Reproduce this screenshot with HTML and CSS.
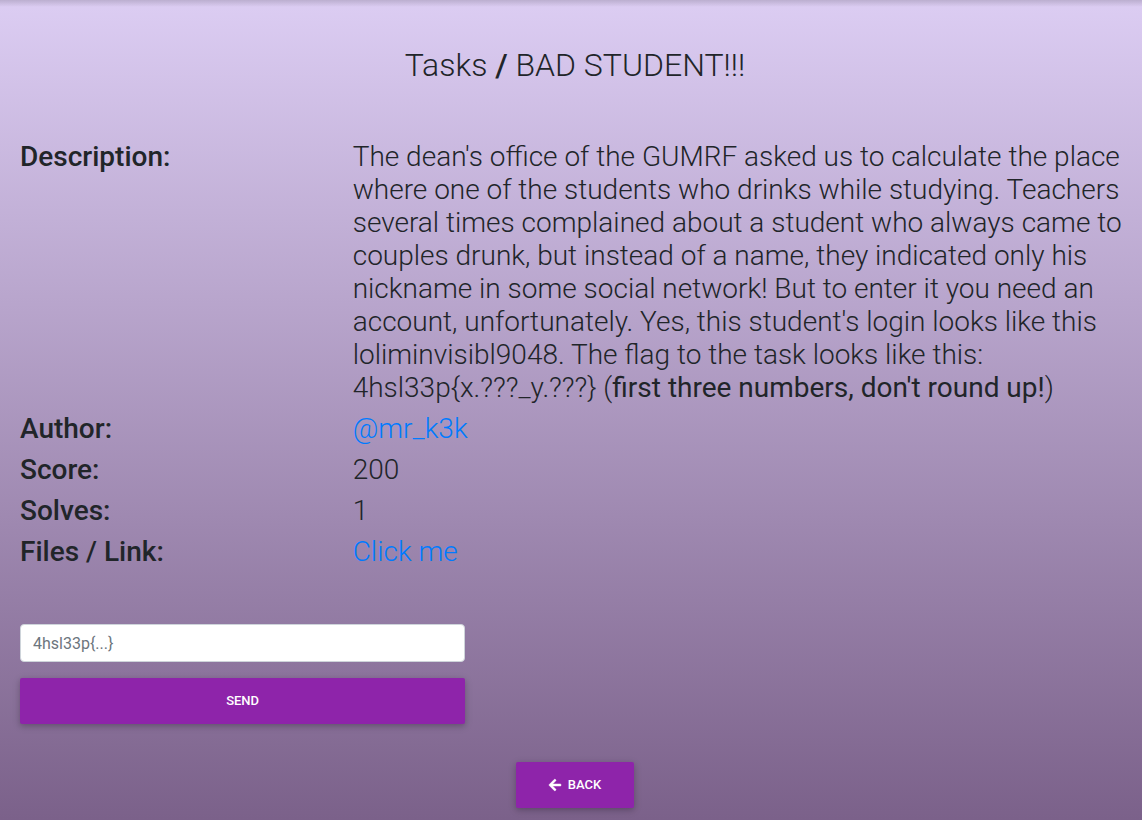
FILE: index.html
```html
<!DOCTYPE html>
<html lang="en">
<head>
<meta charset="utf-8">
<title>BAD STUDENT!!!</title>
<link rel="stylesheet" href="styles.css">
</head>
<body>
<main class="page">
  <h2 class="title">Tasks <strong>/</strong> BAD STUDENT!!!</h2>
  <dl class="details">
    <dt>Description:</dt>
    <dd>The dean's office of the GUMRF asked us to calculate the place where one of the students who drinks while studying. Teachers several times complained about a student who always came to couples drunk, but instead of a name, they indicated only his nickname in some social network! But to enter it you need an account, unfortunately. Yes, this student's login looks like this loliminvisibl9048. The flag to the task looks like this: 4hsl33p{x.???_y.???} (<b>first three numbers, don't round up!</b>)</dd>
    <dt>Author:</dt>
    <dd><a href="#author">@mr_k3k</a></dd>
    <dt>Score:</dt>
    <dd>200</dd>
    <dt>Solves:</dt>
    <dd>1</dd>
    <dt>Files / Link:</dt>
    <dd><a href="#files">Click me</a></dd>
  </dl>
  <form class="flag-form">
    <input class="flag-input" type="text" aria-label="Flag" placeholder="4hsl33p{...}">
    <button class="btn" type="submit">Send</button>
  </form>
  <div class="footer">
    <button class="btn" type="button"><svg class="arrow" viewBox="0 0 448 512" aria-hidden="true"><path d="M257.5 445.1l-22.2 22.2c-9.4 9.4-24.6 9.4-33.9 0L7 273c-9.4-9.4-9.4-24.6 0-33.9L201.4 44.7c9.4-9.4 24.6-9.4 33.9 0l22.2 22.2c9.5 9.5 9.3 25-.4 34.3L136.6 216H424c13.3 0 24 10.7 24 24v32c0 13.3-10.7 24-24 24H136.6l120.5 114.8c9.8 9.3 10 24.8.4 34.3z"/></svg>Back</button>
  </div>
</main>
</body>
</html>
```
FILE: styles.css
```css
* { box-sizing: border-box; }

body {
  margin: 0;
  min-height: 100vh;
  font-family: Roboto, sans-serif;
  font-weight: 300;
  color: #212529;
  background:
    linear-gradient(rgba(0, 0, 0, .15), transparent) top / 100% 7px no-repeat,
    linear-gradient(#dccdf3, #7b618a);
}

.page { padding: 46px 20px 12px; }

.title {
  margin: 0 0 56px;
  padding-left: 8px;
  font-size: 32px;
  line-height: 38px;
  font-weight: 300;
  text-align: center;
}

strong { font-weight: 500; }
b { font-weight: 400; }

.details {
  display: grid;
  grid-template-columns: 3fr 7fr;
  column-gap: 3px;
  row-gap: 8px;
  margin: 0 0 56px;
  font-size: 28px;
  line-height: 33px;
}

.details dt { font-weight: 500; }
.details dd { margin: 0; }

a { color: #007bff; text-decoration: none; }

.flag-form {
  display: grid;
  gap: 16px;
  width: 40.4%;
}

.flag-input {
  width: 100%;
  height: 38px;
  padding: 6px 12px;
  border: 1px solid #ced4da;
  border-radius: 4px;
  font: 400 16px/24px Roboto, sans-serif;
  color: #495057;
  background: #fff;
}

.flag-input::placeholder { color: #6c757d; opacity: 1; }

.btn {
  display: inline-flex;
  align-items: center;
  justify-content: center;
  gap: 7px;
  height: 46px;
  padding: 0 33px;
  border: 0;
  border-radius: 2px;
  font: 500 13px/20px Roboto, sans-serif;
  text-transform: uppercase;
  color: #fff;
  background: #8e24aa;
  box-shadow: 0 2px 5px rgba(0, 0, 0, .16), 0 2px 10px rgba(0, 0, 0, .12);
}

.footer {
  display: flex;
  justify-content: center;
  padding: 38px 0 0 8px;
}

.arrow {
  width: 12px;
  height: 14px;
  overflow: visible;
  fill: currentColor;
  stroke: currentColor;
  stroke-width: 16;
}
```
